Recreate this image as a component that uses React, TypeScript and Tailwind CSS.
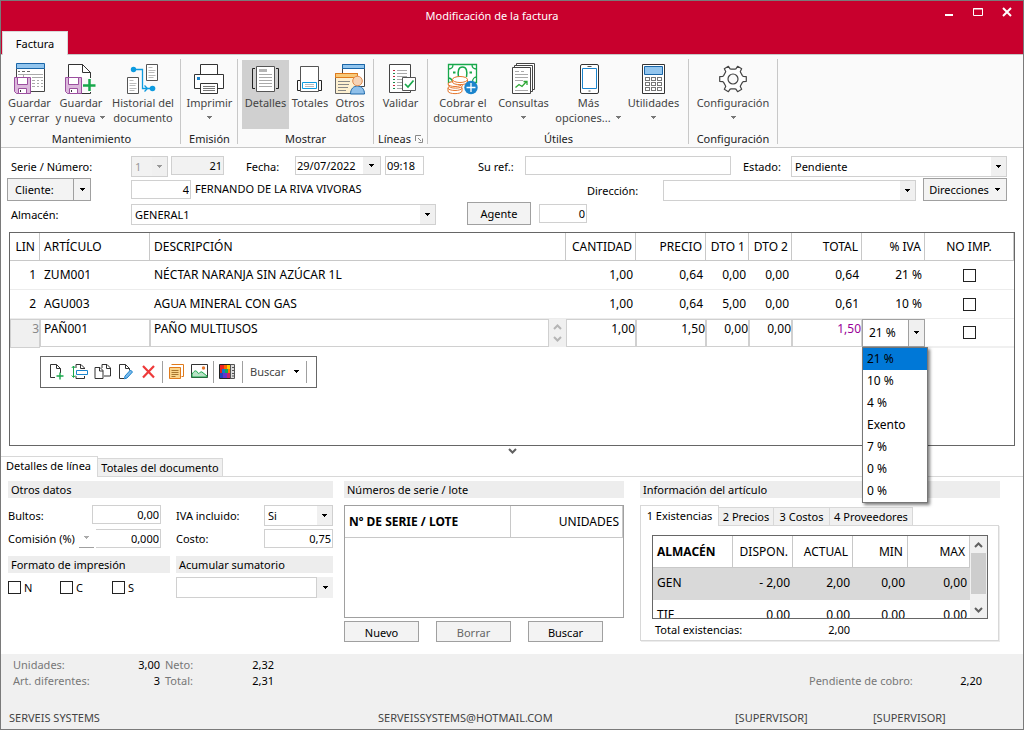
import React, { useState } from "react";
import clsx from "clsx";

/* ---------- small glyphs ---------- */

function Caret({ className = "text-black" }: { className?: string }) {
  return (
    <svg width="7" height="4" viewBox="0 0 7 4" className={clsx("shrink-0", className)} shapeRendering="crispEdges" aria-hidden="true">
      <path d="M1 0h5v1H1zM2 1h3v1H2zM3 2h1v1H3z" fill="currentColor" />
    </svg>
  );
}

function Chevron({ up = false, className = "text-[#606060]" }: { up?: boolean; className?: string }) {
  return (
    <svg width="9" height="6" viewBox="0 0 9 6" className={className} aria-hidden="true">
      <path d={up ? "M1 5l3.5-3.5L8 5" : "M1 1l3.5 3.5L8 1"} fill="none" stroke="currentColor" strokeWidth="2" />
    </svg>
  );
}

/* ---------- ribbon icons ---------- */

function Icon({ children }: { children: React.ReactNode }) {
  return (
    <svg width="32" height="32" viewBox="0 0 32 32" fill="none" className="shrink-0" aria-hidden="true">
      {children}
    </svg>
  );
}

const Floppy = () => (
  <g stroke="#9b4f9f">
    <path d="M.5 14.5h16v16H2.500L.5 28.500z" fill="#dcb8dc" />
    <path d="M3.500 14.500h10v7h-10z" fill="#fff" />
    <path d="M4.500 25.500h8v5h-8z" fill="#fff" />
    <path d="M6.500 27v2" stroke="#333" />
  </g>
);

const SaveCloseIcon = () => (
  <Icon>
    <path d="M2.500 5.500h28v23h-28z" fill="#fff" stroke="#444" />
    <path d="M2.500.5h28v5h-28z" fill="#92c5ee" stroke="#1a66a8" />
    <path d="M4 8.500h2m2 0h3m2 0h3" stroke="#666" />
    <path d="M4 11.500h25M9.500 11v4M18 14.500h11M18 17.500h3m2 0h2m2 0h2M18 20.500h3m2 0h2m2 0h2M18 23.500h3m2 0h2m2 0h2" stroke="#aaa" />
    <Floppy />
  </Icon>
);

const SaveNewIcon = () => (
  <Icon>
    <path d="M3.500 30V1.500h14l8 8v21h-22" fill="#fff" stroke="#333" />
    <path d="M17.500 1.500v8h8z" fill="#fff" stroke="#333" />
    <Floppy />
    <path d="M17 15h14v14H17z" fill="#fafafa" />
    <path d="M24.500 16v12M18 22.500h12.500" stroke="#18a84b" strokeWidth="2.500" />
  </Icon>
);

const HistoryIcon = () => (
  <Icon>
    <path d="M19.500 1.500h11v16h-11z" fill="#fff" stroke="#555" />
    <path d="M21.500 4.500h4M21.500 7.500h7M21.500 9.500h6M21.500 12.500h7M21.500 14.500h5" stroke="#bbb" />
    <path d="M.5 14.500h11v16H.5z" fill="#fff" stroke="#555" />
    <path d="M2.500 17.500h4M2.500 20.500h7M2.500 22.500h6M2.500 25.500h7M2.500 27.500h5" stroke="#bbb" />
    <path d="M6.500 6.500h9v19h9M17.500 22.500l3 3-3 3" stroke="#0d9be0" strokeWidth="1.300" />
    <circle cx="6.500" cy="6.500" r="2.700" fill="#0d9be0" />
    <circle cx="25.500" cy="25.500" r="2.800" fill="#0d9be0" />
  </Icon>
);

const PrinterIcon = () => (
  <Icon>
    <path d="M7.500 11V1.500h17V11" fill="#fff" stroke="#333" />
    <path d="M1.500 11.500h29v14h-29z" fill="#fff" stroke="#333" />
    <path d="M4 14h3v3H4z" fill="#1c82c8" />
    <path d="M7.500 20.500h17v10h-17z" fill="#fff" stroke="#333" />
    <path d="M10 23.500h12M10 25.500h12M10 27.500h12" stroke="#777" />
  </Icon>
);

const DetailsIcon = () => (
  <Icon>
    <path d="M6.500 3.500h18v25h-18z" fill="#fff" stroke="#555" />
    <path d="M9 6h8v3H9z" fill="#b5b5b5" />
    <path d="M9 11.500h13M9 14.500h13M9 17.500h13M9 20.500h13M9 23.500h13" stroke="#aaa" />
    <path d="M5 5.500H2.500v20H5M26 5.500h2.500v20H26" stroke="#222" />
  </Icon>
);

const TotalsIcon = () => (
  <Icon>
    <path d="M6.500 3.500h18v25h-18z" fill="#fff" stroke="#555" />
    <path d="M8.500 19.500h14v6h-14z" fill="#fff" stroke="#0d9be0" />
    <path d="M11 21.500h9M11 23.500h9" stroke="#bbb" />
    <path d="M6 17.500H3.500v10H6M25 17.500h2.500v10H25" stroke="#222" />
  </Icon>
);

const OtherDataIcon = () => (
  <Icon>
    <path d="M8.500 1.500h22v22h-22z" fill="#fff" stroke="#444" />
    <path d="M8.500 1.500h22v4h-22z" fill="#92c5ee" stroke="#1a66a8" />
    <path d="M1.500 10.500h22v20h-22z" fill="#fdf0d0" stroke="#666" />
    <path d="M1.500 10.500h22v4h-22z" fill="#f8c978" stroke="#e07b1c" />
    <path d="M4 18.500h12M4 21.500h11M4 24.500h10M4 27.500h8" stroke="#888" />
    <path d="M16.500 31c0-5 3-8 7-8s7 3 7 8z" fill="#8fc0ea" stroke="#1a66a8" />
    <circle cx="23.500" cy="18" r="4.800" fill="#f6d3b5" stroke="#e08a4c" />
  </Icon>
);

const ValidateIcon = () => (
  <Icon>
    <path d="M4.500 1.500h21v28h-21z" fill="#fff" stroke="#444" />
    <path d="M8 7.500h2M8 13.500h2M8 22.500h2" stroke="#c5283c" />
    <path d="M8 10.500h2M8 16.500h2M8 19.500h2M8 25.500h2" stroke="#1a8a4b" />
    <path d="M12 7.500h10M12 10.500h10M12 13.500h10M12 16.500h5M12 19.500h5M12 22.500h5M12 25.500h5" stroke="#aaa" />
    <path d="M17.500 14.500h13v13h-13z" fill="#fff" stroke="#555" />
    <path d="M20 21l3 3 5.500-6.500" stroke="#18a84b" strokeWidth="1.700" />
  </Icon>
);

const CashIcon = () => (
  <Icon>
    <path d="M1.500 1.500h28v18h-28z" fill="#fff" stroke="#18a84b" strokeWidth="1.300" />
    <path d="M1.500 6c3 0 4.500-2 4.500-4.500M29.500 6c-3 0-4.500-2-4.500-4.500M1.500 15c2 0 3 1 4 3M29.500 14c-2 0-4 2-4 5" stroke="#18a84b" strokeWidth="1.300" />
    <path d="M11.500 14c-1-6 0-10 4-10s5 4 4 10" stroke="#18a84b" strokeWidth="1.500" />
    <path d="M6 9.500h2.500M22.500 9.500H25" stroke="#18a84b" strokeWidth="2" />
    <g fill="#fff" stroke="#e5762d">
      <path d="M1 25v3c0 3.500 14 3.500 14 0v-3" />
      <ellipse cx="8" cy="25" rx="7" ry="2.500" />
      <path d="M1.500 20.500v2c0 3.500 14 3.500 14 0v-2" />
      <ellipse cx="8" cy="21" rx="7" ry="2.500" />
      <path d="M5.500 16.500v2.500c0 3.500 15 3.500 15 0v-2.500" />
      <ellipse cx="13" cy="16.500" rx="7.500" ry="3" />
    </g>
    <circle cx="24" cy="24.500" r="6.700" fill="#1b84cc" />
    <path d="M24 20v9M19.500 24.500h9" stroke="#fff" strokeWidth="1.300" />
  </Icon>
);

const QueriesIcon = () => (
  <Icon>
    <path d="M8.500.5h18v26h-18z" fill="#fff" stroke="#444" />
    <path d="M6.500 2.500h18v26h-18z" fill="#fff" stroke="#444" />
    <path d="M4.500 4.500h18v26h-18z" fill="#fff" stroke="#444" />
    <path d="M7 8.500h4m2 0h3M7 11.500h13M7 14.500h13M7 17.500h8M7 27.500h13" stroke="#aaa" />
    <path d="M7.500 24.500l3.500-3 3 2 4.500-5M15.500 18.500h3.500v3.500" stroke="#2fa836" strokeWidth="1.300" />
  </Icon>
);

const PhoneIcon = () => (
  <Icon>
    <rect x="7.500" y="1.500" width="18" height="29" rx="1.500" fill="#fff" stroke="#333" />
    <path d="M9.500 5.500h14v20h-14z" fill="#fff" stroke="#1b84cc" />
    <path d="M14.500 3.500h4M15.500 28h2" stroke="#555" />
  </Icon>
);

const CalculatorIcon = () => (
  <Icon>
    <path d="M4.500 1.500h22v29h-22z" fill="#fff" stroke="#333" />
    <path d="M6.500 3.500h18v8h-18z" fill="#92c5ee" stroke="#1a66a8" />
    {[14.5, 19.5, 24.5].map((y) =>
      [7.5, 13.5, 19.5].map((x) => <rect key={x + "-" + y} x={x} y={y} width="4" height="3" fill="#fff" stroke="#777" />),
    )}
  </Icon>
);

const gearPath = (() => {
  const points: string[] = [];
  const at = (r: number, deg: number) => {
    const a = (deg * Math.PI) / 180;
    points.push((16 + r * Math.cos(a)).toFixed(2) + " " + (16 + r * Math.sin(a)).toFixed(2));
  };
  for (let k = 0; k < 6; k++) {
    const c = k * 60;
    at(10, c - 20);
    at(10.5, c - 14);
    at(13.5, c - 10);
    at(13.5, c + 10);
    at(10.5, c + 14);
    at(10, c + 20);
  }
  return "M" + points.join("L") + "z";
})();

const GearIcon = () => (
  <Icon>
    <path d={gearPath} fill="#fff" stroke="#444" strokeWidth="1.200" strokeLinejoin="round" />
    <circle cx="16" cy="16" r="5" fill="#fafafa" stroke="#444" strokeWidth="1.200" />
  </Icon>
);

/* ---------- ribbon ---------- */

type RibbonButtonProps = {
  icon: React.ReactNode;
  line1: string;
  line2?: string;
  menu?: boolean;
  active?: boolean;
  className?: string;
};

function RibbonButton({ icon, line1, line2, menu, active, className }: RibbonButtonProps) {
  return (
    <button
      type="button"
      className={clsx("flex h-[69px] shrink-0 flex-col items-center pt-[3px] whitespace-nowrap text-[#444]", active && "bg-[#d0d0d0]", className)}
    >
      {icon}
      <span className="leading-[15px]">{line1}</span>
      {(line2 || menu) && (
        <span className="flex h-[15px] items-center gap-1 leading-[15px]">
          {line2}
          {menu && <Caret className="text-[#777]" />}
        </span>
      )}
    </button>
  );
}

function RibbonGroup({ label, children, className, extra }: { label: string; children: React.ReactNode; className?: string; extra?: React.ReactNode }) {
  return (
    <section className={clsx("mt-[4px] mb-[3px] flex shrink-0 flex-col border-r border-[#c8c8c8]", className)}>
      <div className="flex justify-center pt-px">{children}</div>
      <div className="mt-[2px] flex items-center justify-center gap-1 leading-[15px] text-[#222]">
        {label}
        {extra}
      </div>
    </section>
  );
}

function Ribbon() {
  return (
    <div className="flex h-[94px] border-y border-[#c8c8c8] bg-[#fafafa]">
      <RibbonGroup label="Mantenimiento" className="w-[180px] pl-[2px]">
        <RibbonButton className="w-[50px]" icon={<SaveCloseIcon />} line1="Guardar" line2="y cerrar" />
        <RibbonButton className="w-[53px]" icon={<SaveNewIcon />} line1="Guardar" line2="y nueva" menu />
        <RibbonButton className="w-[71px]" icon={<HistoryIcon />} line1="Historial del" line2="documento" />
      </RibbonGroup>
      <RibbonGroup label="Emisión" className="w-[57px] pl-px">
        <RibbonButton icon={<PrinterIcon />} line1="Imprimir" menu />
      </RibbonGroup>
      <RibbonGroup label="Mostrar" className="w-[136px]">
        <RibbonButton className="w-[47px]" icon={<DetailsIcon />} line1="Detalles" active />
        <RibbonButton className="w-[42px]" icon={<TotalsIcon />} line1="Totales" />
        <RibbonButton className="w-[38px]" icon={<OtherDataIcon />} line1="Otros" line2="datos" />
      </RibbonGroup>
      <RibbonGroup
        label="Líneas"
        className="w-[54px]"
        extra={
          <svg width="8" height="8" viewBox="0 0 8 8" fill="none" stroke="#888" aria-hidden="true">
            <path d="M.5 6V.5H6M3 3l3 3M7.500 3.500v4h-4" />
          </svg>
        }
      >
        <RibbonButton icon={<ValidateIcon />} line1="Validar" />
      </RibbonGroup>
      <RibbonGroup label="Útiles" className="w-[261px] pl-px">
        <RibbonButton className="w-[60px]" icon={<CashIcon />} line1="Cobrar el" line2="documento" />
        <RibbonButton className="w-[61px]" icon={<QueriesIcon />} line1="Consultas" menu />
        <RibbonButton className="w-[69px]" icon={<PhoneIcon />} line1="Más" line2="opciones..." menu />
        <RibbonButton className="w-[61px]" icon={<CalculatorIcon />} line1="Utilidades" menu />
      </RibbonGroup>
      <RibbonGroup label="Configuración" className="w-[89px]">
        <RibbonButton icon={<GearIcon />} line1="Configuración" menu />
      </RibbonGroup>
    </div>
  );
}

/* ---------- form controls ---------- */

type FieldProps = { label?: string; id?: string; value?: string; right?: boolean; disabled?: boolean; className?: string };

function TextField({ label, id, value = "", right, disabled, className }: FieldProps) {
  return (
    <input
      id={id}
      aria-label={label}
      defaultValue={value}
      readOnly={disabled}
      className={clsx(
        "h-[19px] min-w-0 border border-[#d0d0d0] px-px outline-none",
        right && "text-right",
        disabled ? "bg-[#f2f2f2]" : "bg-white",
        className,
      )}
    />
  );
}

function SelectField({ label, id, value = "", disabled, className }: FieldProps) {
  return (
    <span className={clsx("flex h-[21px] items-stretch border border-[#d0d0d0]", disabled ? "bg-[#f2f2f2] text-[#999]" : "bg-white", className)}>
      <select id={id} aria-label={label} disabled={disabled} className="min-w-0 flex-1 appearance-none pl-[3px] outline-none">
        <option>{value}</option>
      </select>
      <span className="flex w-[15px] shrink-0 items-center justify-center bg-[#f0f0f0]">
        <Caret className={disabled ? "text-[#999]" : "text-black"} />
      </span>
    </span>
  );
}

function CommandButton({ children, muted, className }: { children: React.ReactNode; muted?: boolean; className?: string }) {
  return (
    <button
      type="button"
      className={clsx("flex items-center justify-center border border-[#a0a0a0] bg-[#f3f3f3] whitespace-nowrap", muted && "text-[#666]", className)}
    >
      {children}
    </button>
  );
}

function InvoiceForm() {
  return (
    <form className="pt-2 pr-[16px] pl-[6px] whitespace-nowrap">
      <div className="flex h-[22px] items-start">
        <label htmlFor="serie" className="w-[124px] pl-1 leading-[22px]">Serie / Número:</label>
        <SelectField id="serie" value="1" disabled className="w-[37px]" />
        <TextField label="Número" value="21" right disabled className="ml-[3px] w-[53px]" />
        <label htmlFor="fecha" className="ml-[22px] w-[49px] leading-[22px]">Fecha:</label>
        <span className="flex h-[19px] w-[86px] border border-[#d0d0d0] bg-white">
          <input id="fecha" defaultValue="29/07/2022" className="min-w-0 flex-1 pl-px outline-none" />
          <button type="button" aria-label="Abrir calendario" className="flex w-[17px] items-center justify-center bg-[#f0f0f0]"><Caret /></button>
        </span>
        <TextField label="Hora" value="09:18" className="ml-[4px] w-[39px]" />
        <label htmlFor="ref" className="ml-[54px] w-[47px] leading-[22px]">Su ref.:</label>
        <TextField id="ref" className="flex-1" />
        <label htmlFor="estado" className="ml-[12px] w-[48px] leading-[22px]">Estado:</label>
        <SelectField id="estado" value="Pendiente" className="w-[216px]" />
      </div>
      <div className="flex h-[24px] items-start">
        <div className="flex h-[23px] w-[84px] border border-[#a0a0a0] bg-[#f3f3f3]">
          <button type="button" className="flex-1 border-r border-[#a0a0a0] pl-[7px] text-left">Cliente:</button>
          <button type="button" aria-label="Opciones de cliente" className="flex w-[16px] items-center justify-center"><Caret /></button>
        </div>
        <TextField label="Código de cliente" value="4" right className="mt-[2px] ml-[40px] w-[60px]" />
        <span className="ml-[4px] flex-1 leading-[22px]">FERNANDO DE LA RIVA VIVORAS</span>
        <label htmlFor="direccion" className="w-[76px] leading-[26px]">Dirección:</label>
        <SelectField id="direccion" className="mt-[2px] w-[253px]" />
        <CommandButton className="ml-[7px] h-[23px] w-[84px] gap-[5px]">Direcciones<Caret /></CommandButton>
      </div>
      <div className="flex h-[24px] items-start">
        <label htmlFor="almacen" className="w-[124px] pl-1 leading-[26px]">Almacén:</label>
        <SelectField id="almacen" value="GENERAL1" className="mt-[2px] w-[305px]" />
        <CommandButton className="ml-[31px] h-[23px] w-[64px]">Agente</CommandButton>
        <TextField label="Agente" value="0" right className="mt-[2px] ml-[8px] w-[48px]" />
      </div>
    </form>
  );
}

/* ---------- invoice lines ---------- */

const lines = [
  { n: 1, code: "ZUM001", text: "NÉCTAR NARANJA SIN AZÚCAR 1L", nums: ["1,00", "0,64", "0,00", "0,00", "0,64", "21 %"] },
  { n: 2, code: "AGU003", text: "AGUA MINERAL CON GAS", nums: ["1,00", "0,64", "5,00", "0,00", "0,61", "10 %"] },
];

const vatOptions = ["21 %", "10 %", "4 %", "Exento", "7 %", "0 %", "0 %"];

function Tick({ label, id }: { label?: string; id?: string }) {
  return (
    <input
      id={id}
      type="checkbox"
      aria-label={label}
      className="block h-[13px] w-[13px] shrink-0 appearance-none border border-[#222] bg-white checked:bg-[#0078d7]"
    />
  );
}

function VatCell() {
  const [selected, setSelected] = useState(0);
  return (
    <div className="relative">
      <div className="flex h-[28px] border border-[#a0a0a0] bg-white">
        <select
          aria-label="% IVA línea 3"
          value={selected}
          onChange={(e) => setSelected(Number(e.target.value))}
          className="min-w-0 flex-1 appearance-none pl-[6px] outline-none"
        >
          {vatOptions.map((option, i) => (
            <option key={i} value={i}>{option}</option>
          ))}
        </select>
        <span className="flex w-[16px] items-center justify-center border-l border-[#a0a0a0] bg-[#f0f0f0]"><Caret /></span>
      </div>
      <ul role="listbox" aria-label="Tipos de IVA" className="absolute top-[28px] left-0 z-10 w-[66px] border border-[#777] bg-white shadow-[2px_2px_3px_rgba(0,0,0,0.5)]">
        {vatOptions.map((option, i) => (
          <li
            key={i}
            role="option"
            aria-selected={i === selected}
            onClick={() => setSelected(i)}
            className={clsx("h-[22px] pl-1 text-left leading-[22px]", i === selected && "bg-[#0078d7]")}
          >
            {option}
          </li>
        ))}
      </ul>
    </div>
  );
}

function CellInput({ label, value, left, purple }: { label: string; value: string; left?: boolean; purple?: boolean }) {
  return (
    <input
      aria-label={label}
      defaultValue={value}
      className={clsx("block h-[28px] w-full min-w-0 border border-[#d0d0d0] bg-white pb-[9px] outline-none", left ? "pl-[3px]" : "pr-0 text-right", purple && "text-[#990099]")}
    />
  );
}

function ToolButton({ label, children }: { label: string; children: React.ReactNode }) {
  return (
    <button type="button" aria-label={label} className="flex h-[23px] w-[23px] shrink-0 items-center justify-center">
      <svg width="17" height="17" viewBox="0 0 17 17" fill="none" aria-hidden="true">{children}</svg>
    </button>
  );
}

const ToolDivider = ({ className }: { className?: string }) => <span className={clsx("h-[22px] w-px shrink-0 bg-[#a0a0a0]", className)} />;

function LineToolbar() {
  return (
    <div role="toolbar" aria-label="Líneas" className="mt-[8px] ml-[30px] flex h-[32px] w-[277px] items-center border border-[#666] bg-white pb-px pl-[4px]">
      <ToolButton label="Nueva línea">
        <path d="M7 14.500H2.500v-13h6l4 4V10" stroke="#333" /><path d="M8.500 1.500v4h4" stroke="#333" /><path d="M12 9.500v7M8.500 13h7" stroke="#18a84b" strokeWidth="1.400" />
      </ToolButton>
      <ToolButton label="Insertar línea">
        <path d="M5 5V1.500h5l3.500 3.500v1M9.500 1.500v4h4M5 13v2.500h8.500V13" stroke="#333" /><path d="M5.500 7.500h11v4h-11z" fill="#fff" stroke="#1b84cc" /><path d="M2.500 3v11M.8 5l1.700-2 1.700 2M.8 12.500l1.700 2 1.700-2" stroke="#18a84b" />
      </ToolButton>
      <ToolButton label="Duplicar línea">
        <path d="M8 5V1.500h5l3.500 3.500v8H10" stroke="#333" /><path d="M12.500 1.500v4h4" stroke="#333" /><path d="M1 4.500h5l3 3v8H1z" fill="#fff" stroke="#333" /><path d="M5.500 4.500v3.500H9" stroke="#333" />
      </ToolButton>
      <ToolButton label="Modificar línea">
        <path d="M7 15.500H2.500v-14h6l4 4v2M8.500 1.500v4h4" stroke="#333" /><path d="M13.500 7l2 2-5.500 6-2.500.8.500-2.800z" fill="#7ab8ea" stroke="#1b84cc" />
      </ToolButton>
      <ToolButton label="Borrar línea">
        <path d="M3 3l11 11.500M14 3L3 14.500" stroke="#ee3a3a" strokeWidth="2.200" />
      </ToolButton>
      <ToolDivider className="mx-[2px]" />
      <ToolButton label="Notas">
        <path d="M3.500 1.500h12v12h-2" fill="#fff" stroke="#e07b1c" /><path d="M1.500 4.500h11v11h-11z" fill="#fbd58c" stroke="#e07b1c" /><path d="M3.500 7.500h7M3.500 9.500h7M3.500 11.500h7M3.500 13.500h4" stroke="#a87730" />
      </ToolButton>
      <ToolButton label="Imagen">
        <path d="M.5 1.500h16v13H.5z" fill="#fff" stroke="#333" /><path d="M1 11c3-4 4-4 6-1 1 2 2-2 4-1l5 4v1H1z" fill="#b9e2c6" stroke="#18a84b" /><circle cx="12.500" cy="5" r="1.700" fill="#e5762d" />
      </ToolButton>
      <ToolDivider className="mx-[2px]" />
      <ToolButton label="Tallas y colores">
        <path d="M.5 1.500h12v14H.5z" fill="#27b" stroke="#222" />
        <path d="M1 2h4v4H1z" fill="#e22" /><path d="M5 2h3v4H5z" fill="#f60" /><path d="M8 2h4v4H8z" fill="#fc0" />
        <path d="M1 6h2v4H1z" fill="#d22" /><path d="M3 6h3v4H3z" fill="#17c" /><path d="M6 6h3v4H6z" fill="#1a5" /><path d="M9 6h3v4H9z" fill="#f70" />
        <path d="M1 10h3v5H1z" fill="#24b" /><path d="M4 10h4v5H4z" fill="#63c" /><path d="M8 10h4v5H8z" fill="#c26" />
        <path d="M11.500 1.500h4v14h-4z" fill="#ddd" stroke="#555" /><path d="M13 4.500h2M13 7.500h2M13 10.500h2M13 13h2" stroke="#555" />
      </ToolButton>
      <ToolDivider className="ml-[3px]" />
      <button type="button" className="ml-[7px] flex items-center gap-[8px] text-[#444]">Buscar<Caret /></button>
      <ToolDivider className="ml-[6px]" />
    </div>
  );
}

function LinesTable() {
  const head = "h-[28px] border-r border-b border-[#c8c8c8] font-normal";
  return (
    <div className="mx-[8px] mt-[6px] flex-1 border border-[#666] bg-white">
      <table className="w-full table-fixed border-separate border-spacing-0 text-[12px] leading-[16px] whitespace-nowrap">
        <colgroup>
          <col className="w-[30px]" />
          <col className="w-[110px]" />
          <col />
          <col className="w-[70px]" />
          <col className="w-[70px]" />
          <col className="w-[43px]" />
          <col className="w-[43px]" />
          <col className="w-[70px]" />
          <col className="w-[63px]" />
          <col className="w-[89px]" />
        </colgroup>
        <thead>
          <tr>
            <th className={clsx(head, "pr-1 text-right")}>LIN</th>
            <th className={clsx(head, "pl-1 text-left")}>ARTÍCULO</th>
            <th className={clsx(head, "pl-1 text-left")}>DESCRIPCIÓN</th>
            {["CANTIDAD", "PRECIO", "DTO 1", "DTO 2", "TOTAL", "% IVA"].map((t) => (
              <th key={t} className={clsx(head, "pr-[3px] text-right")}>{t}</th>
            ))}
            <th className={clsx(head, "text-center")}>NO IMP.</th>
          </tr>
        </thead>
        <tbody>
          {lines.map((line) => (
            <tr key={line.n}>
              <td className="h-[29px] border-b border-[#ececec] pr-1 text-right">{line.n}</td>
              <td className="border-b border-[#ececec] pl-1">{line.code}</td>
              <td className="border-b border-[#ececec] pl-1">{line.text}</td>
              {line.nums.map((v, i) => (
                <td key={i} className="border-b border-[#ececec] pr-[3px] text-right">{v}</td>
              ))}
              <td className="border-b border-[#ececec]">
                <div className="flex justify-center"><Tick label={"No imprimir línea " + line.n} /></div>
              </td>
            </tr>
          ))}
          <tr className="align-top">
            <td className="h-[29px] border border-[#d0d0d0] bg-[#f0f0f0] pt-px text-right text-[#888]">3</td>
            <td className="p-0"><CellInput label="Artículo" value="PAÑ001" left /></td>
            <td className="p-0">
              <div className="flex">
                <CellInput label="Descripción" value="PAÑO MULTIUSOS" left />
                <div className="flex w-[17px] shrink-0 flex-col items-center justify-around bg-[#f0f0f0] py-[2px]">
                  <Chevron up className="text-[#b5b5b5]" />
                  <Chevron className="text-[#b5b5b5]" />
                </div>
              </div>
            </td>
            <td className="p-0"><CellInput label="Cantidad" value="1,00" /></td>
            <td className="p-0"><CellInput label="Precio" value="1,50" /></td>
            <td className="p-0"><CellInput label="Dto 1" value="0,00" /></td>
            <td className="p-0"><CellInput label="Dto 2" value="0,00" /></td>
            <td className="p-0"><CellInput label="Total" value="1,50" purple /></td>
            <td className="p-0"><VatCell /></td>
            <td className="border-b-2 border-[#f0f0f0] align-middle">
              <div className="flex justify-center"><Tick label="No imprimir línea 3" /></div>
            </td>
          </tr>
        </tbody>
      </table>
      <LineToolbar />
    </div>
  );
}

/* ---------- detail panels ---------- */

function SectionTitle({ children, className }: { children: React.ReactNode; className?: string }) {
  return <h2 className={clsx("h-[17px] bg-[#ededed] pl-[3px] leading-[18px]", className)}>{children}</h2>;
}

function OtherData() {
  return (
    <div className="w-[325px] shrink-0 whitespace-nowrap">
      <SectionTitle>Otros datos</SectionTitle>
      <div className="mt-[7px] flex h-[24px] items-start">
        <label htmlFor="bultos" className="w-[84px] leading-[22px]">Bultos:</label>
        <TextField id="bultos" value="0,00" right className="w-[69px]" />
        <label htmlFor="iva" className="ml-[15px] w-[88px] leading-[22px]">IVA incluido:</label>
        <SelectField id="iva" value="Si" className="w-[69px]" />
      </div>
      <div className="flex h-[27px] items-start">
        <label htmlFor="comision" className="w-[71px] leading-[19px]">Comisión (%)</label>
        <button type="button" aria-label="Tipo de comisión" className="flex h-[19px] w-[15px] items-center justify-center border-b border-[#a0a0a0]">
          <Caret className="text-[#aaa]" />
        </button>
        <TextField id="comision" value="0,000" right className="ml-[2px] w-[65px] border-l-0" />
        <label htmlFor="costo" className="ml-[15px] w-[88px] leading-[19px]">Costo:</label>
        <TextField id="costo" value="0,75" right className="w-[69px]" />
      </div>
      <div className="flex gap-[6px]">
        <div className="w-[162px] shrink-0">
          <SectionTitle>Formato de impresión</SectionTitle>
          <div className="mt-[8px] flex">
            {["N", "C", "S"].map((c) => (
              <label key={c} className="flex w-[52px] items-center gap-[3px] leading-[13px]">
                <Tick />
                {c}
              </label>
            ))}
          </div>
        </div>
        <div className="min-w-0 flex-1">
          <SectionTitle>Acumular sumatorio</SectionTitle>
          <div className="mt-[4px] flex">
            <TextField label="Acumular sumatorio" className="h-[21px] flex-1" />
            <button type="button" aria-label="Abrir lista" className="flex w-[16px] shrink-0 items-center justify-center bg-[#f0f0f0]"><Caret /></button>
          </div>
        </div>
      </div>
    </div>
  );
}

function SerialNumbers() {
  return (
    <div className="ml-[11px] w-[280px] shrink-0">
      <SectionTitle>Números de serie / lote</SectionTitle>
      <div className="mt-[7px] h-[113px] border border-[#a0a0a0] bg-white">
        <table className="w-full table-fixed border-separate border-spacing-0 text-[12px]">
          <thead>
            <tr>
              <th className="h-[32px] w-[166px] border-r border-b border-[#c8c8c8] pl-1 text-left font-bold">Nº DE SERIE / LOTE</th>
              <th className="border-r border-b border-[#c8c8c8] pr-[3px] text-right font-normal">UNIDADES</th>
            </tr>
          </thead>
        </table>
      </div>
      <div className="mt-[3px] flex gap-[17px]">
        <CommandButton className="h-[21px] w-[75px] pt-px">Nuevo</CommandButton>
        <CommandButton className="h-[21px] w-[75px] pt-px" muted>Borrar</CommandButton>
        <CommandButton className="h-[21px] w-[75px] pt-px">Buscar</CommandButton>
      </div>
    </div>
  );
}

const stock = [
  ["GEN", "- 2,00", "2,00", "0,00", "0,00"],
  ["TIE", "0,00", "0,00", "0,00", "0,00"],
];

function ArticleInfo() {
  const head = "h-[32px] border-r border-b border-[#c8c8c8] pr-1 text-right font-normal";
  return (
    <div className="mr-[23px] ml-[16px] min-w-0 flex-1 whitespace-nowrap">
      <SectionTitle>Información del artículo</SectionTitle>
      <div role="tablist" className="mt-[7px] flex h-[20px] items-end">
        <button role="tab" aria-selected="true" className="relative top-px h-[21px] w-[79px] border border-b-0 border-[#d8d8d8] bg-white pb-px">1 Existencias</button>
        <button role="tab" aria-selected="false" className="h-[18px] w-[55px] border-t border-r border-[#d8d8d8] bg-[#f0f0f0]">2 Precios</button>
        <button role="tab" aria-selected="false" className="h-[18px] w-[56px] border-t border-r border-[#d8d8d8] bg-[#f0f0f0]">3 Costos</button>
        <button role="tab" aria-selected="false" className="h-[18px] w-[83px] border-t border-r border-[#d8d8d8] bg-[#f0f0f0]">4 Proveedores</button>
      </div>
      <div className="mr-px border border-[#d8d8d8] bg-white pt-[9px] pr-[10px] pl-[11px] shadow-[1px_1px_0_#ececec]">
        <div className="flex h-[84px] overflow-hidden border border-[#666]">
          <table className="h-[96px] flex-1 table-fixed border-separate border-spacing-0 text-[12px] leading-[16px]">
            <thead>
              <tr>
                <th className="h-[32px] w-[80px] border-r border-b border-[#c8c8c8] pl-1 text-left font-bold">ALMACÉN</th>
                <th className={clsx(head, "w-[60px]")}>DISPON.</th>
                <th className={clsx(head, "w-[60px]")}>ACTUAL</th>
                <th className={clsx(head, "w-[55px]")}>MIN</th>
                <th className={head}>MAX</th>
              </tr>
            </thead>
            <tbody>
              {stock.map((row, r) => (
                <tr key={row[0]} className={r === 0 ? "bg-[#d9d9d9]" : "bg-white"}>
                  {row.map((v, i) => (
                    <td key={i} className={clsx("h-[32px] pb-[2px]", i === 0 ? "pl-1" : "pr-[3px] text-right")}>{v}</td>
                  ))}
                </tr>
              ))}
            </tbody>
          </table>
          <div className="flex w-[17px] shrink-0 flex-col items-center bg-[#f0f0f0]">
            <span className="flex h-[17px] items-center"><Chevron up /></span>
            <span className="h-[41px] w-[15px] bg-[#cdcdcd]" />
            <span className="mt-auto flex h-[17px] items-center"><Chevron /></span>
          </div>
        </div>
        <div className="flex h-[21px] pl-[3px] leading-[22px]">
          <span className="w-[145px]">Total existencias:</span>
          <span className="w-[50px] text-right">2,00</span>
        </div>
      </div>
    </div>
  );
}

function StatusBar() {
  return (
    <footer className="mt-[12px] h-[75px] bg-[#f0f0f0] pt-[3px] whitespace-nowrap text-[#444]">
      <div className="flex pr-[41px] pl-[12px] leading-[16px]">
        <dl className="grid grid-cols-[100px_47px_50px_64px]">
          <dt className="text-[#777]">Unidades:</dt>
          <dd className="text-right text-black">3,00</dd>
          <dt className="pl-[5px] text-[#777]">Neto:</dt>
          <dd className="text-right text-black">2,32</dd>
          <dt className="text-[#777]">Art. diferentes:</dt>
          <dd className="text-right text-black">3</dd>
          <dt className="pl-[5px] text-[#777]">Total:</dt>
          <dd className="text-right text-black">2,31</dd>
        </dl>
        <div className="ml-auto flex items-end">
          <span className="w-[123px] text-[#777]">Pendiente de cobro:</span>
          <span className="w-[50px] text-right text-black">2,20</span>
        </div>
      </div>
      <div className="mt-[21px] flex pl-[8px] leading-[16px]">
        <span className="w-[369px]">SERVEIS SYSTEMS</span>
        <span className="flex-1">SERVEISSYSTEMS@HOTMAIL.COM</span>
        <span className="w-[138px]">[SUPERVISOR]</span>
        <span className="w-[150px]">[SUPERVISOR]</span>
      </div>
    </footer>
  );
}

export default function App() {
  return (
    <div className="flex min-h-screen flex-col border border-[#7a7a7a] bg-white font-['Noto_Sans','Open_Sans',sans-serif] text-[11px] leading-[15px] text-black">
      <header className="bg-[#c8002d]">
        <div className="flex h-[29px] items-center pl-[52px] text-white">
          <h1 className="flex-1 text-center">Modificación de la factura</h1>
          <div className="flex w-[92px] items-center gap-[19px] pb-[7px] pl-[13px]">
            <button type="button" aria-label="Minimizar">
              <svg width="10" height="10" viewBox="0 0 10 10" className="block"><path d="M1 7h8v2H1z" fill="#fff" /></svg>
            </button>
            <button type="button" aria-label="Maximizar">
              <svg width="10" height="10" viewBox="0 0 10 10" className="block"><path d="M.5 1.500h9v7h-9zM0 2h10" fill="none" stroke="#fff" /></svg>
            </button>
            <button type="button" aria-label="Cerrar">
              <svg width="10" height="10" viewBox="0 0 10 10" className="block"><path d="M1 1l8 8M9 1L1 9" stroke="#fff" strokeWidth="2" /></svg>
            </button>
          </div>
        </div>
        <div className="flex h-[24px] pl-px">
          <button type="button" className="relative top-px z-10 h-[24px] w-[66px] border border-b-0 border-[#d8d8d8] bg-[#fafafa] pb-px">Factura</button>
        </div>
      </header>
      <Ribbon />
      <InvoiceForm />
      <LinesTable />
      <div className="flex h-[10px] items-center justify-center"><Chevron /></div>
      <div role="tablist" className="flex h-[21px] items-end border-b border-[#d8d8d8] whitespace-nowrap">
        <button role="tab" aria-selected="true" className="relative top-px h-[21px] w-[97px] border border-b-0 border-l-0 border-[#d8d8d8] bg-white pr-px pb-[3px]">Detalles de línea</button>
        <button role="tab" aria-selected="false" className="h-[18px] w-[125px] border-t border-r border-[#d8d8d8] bg-[#f0f0f0]">Totales del documento</button>
      </div>
      <div className="flex pt-[4px] pl-[7px]">
        <OtherData />
        <SerialNumbers />
        <ArticleInfo />
      </div>
      <StatusBar />
    </div>
  );
}
